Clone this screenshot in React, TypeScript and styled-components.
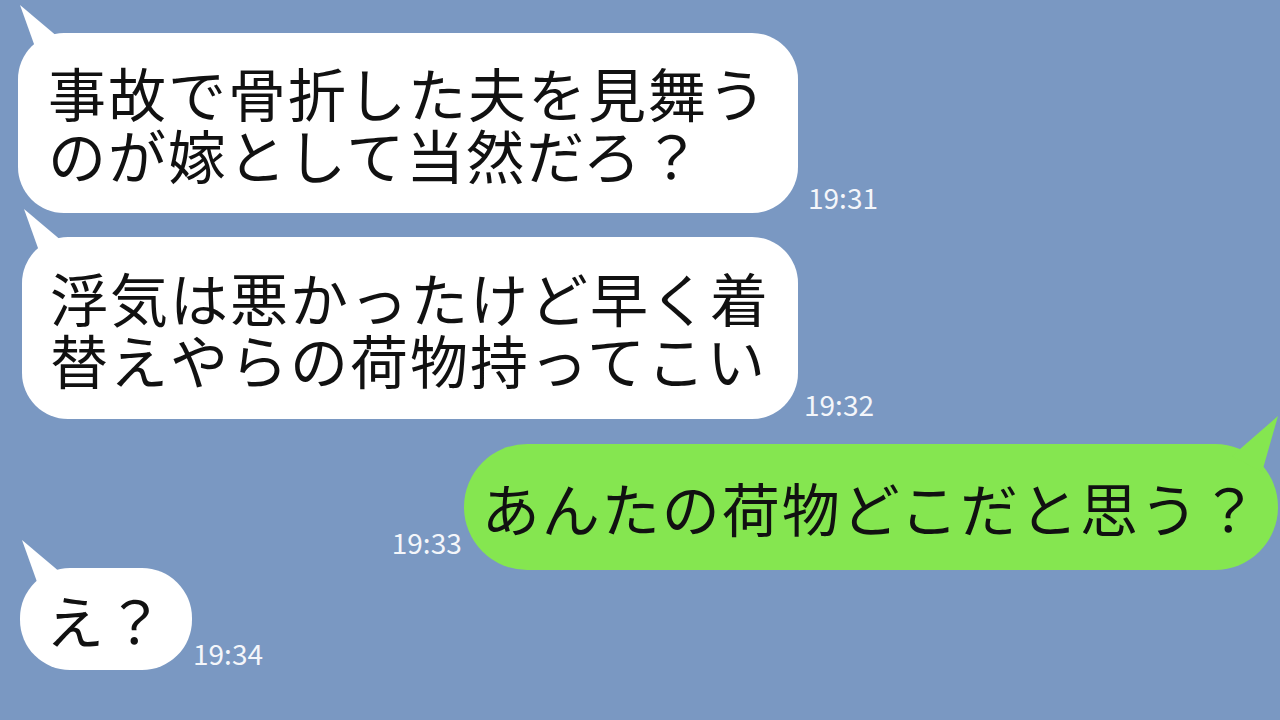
import React from 'react';
import styled, { createGlobalStyle } from 'styled-components';

const GlobalStyle = createGlobalStyle`
  html, body {
    margin: 0;
    padding: 0;
    background: #7a98c2;
  }
  body {
    font-family: "Noto Sans CJK JP", "Noto Sans", sans-serif;
  }
`;

type Side = 'left' | 'right';

interface Message {
  side: Side;
  lines: string[];
  time: string;
  top: number;
  inset: number;
  padY: number;
  padX: number;
  radius: number;
  timeGap: number;
  timeLift: number;
}

const messages: Message[] = [
  {
    side: 'left',
    lines: ['事故で骨折した夫を見舞う', 'のが嫁として当然だろ？'],
    time: '19:31',
    top: 33,
    inset: 18,
    padY: 28,
    padX: 30,
    radius: 46,
    timeGap: 10,
    timeLift: 2,
  },
  {
    side: 'left',
    lines: ['浮気は悪かったけど早く着', '替えやらの荷物持ってこい'],
    time: '19:32',
    top: 24,
    inset: 22,
    padY: 29,
    padX: 28,
    radius: 46,
    timeGap: 6,
    timeLift: 1,
  },
  {
    side: 'right',
    lines: ['あんたの荷物どこだと思う？'],
    time: '19:33',
    top: 25,
    inset: 2,
    padY: 32,
    padX: 18,
    radius: 64,
    timeGap: 2,
    timeLift: 14,
  },
  {
    side: 'left',
    lines: ['え？'],
    time: '19:34',
    top: -2,
    inset: 20,
    padY: 20,
    padX: 26,
    radius: 50,
    timeGap: 1,
    timeLift: 3,
  },
];

const Chat = styled.div`
  width: 1280px;
  height: 720px;
  overflow: hidden;
  display: flex;
  flex-direction: column;
  background: #7a98c2;
`;

const Row = styled.div<{ $side: Side; $top: number; $inset: number }>`
  display: flex;
  flex-direction: ${(p) => (p.$side === 'left' ? 'row' : 'row-reverse')};
  align-items: flex-end;
  margin-top: ${(p) => p.$top}px;
  padding-left: ${(p) => (p.$side === 'left' ? p.$inset : 0)}px;
  padding-right: ${(p) => (p.$side === 'right' ? p.$inset : 0)}px;
`;

const Bubble = styled.div<{ $side: Side; $padY: number; $padX: number; $radius: number }>`
  position: relative;
  background: ${(p) => (p.$side === 'left' ? '#ffffff' : '#85e650')};
  border-radius: ${(p) => p.$radius}px;
  padding: ${(p) => `${p.$padY}px ${p.$padX}px`};
  color: #111111;
  font-size: 58px;
  line-height: 62px;
  letter-spacing: 2px;
  white-space: nowrap;
`;

const Tail = styled.svg<{ $side: Side }>`
  position: absolute;
  top: -30px;
  ${(p) => (p.$side === 'left' ? 'left: -10px;' : 'right: -10px;')}
  width: 60px;
  height: 60px;
  overflow: visible;
`;

const Line = styled.div`
  display: block;
`;

const Time = styled.span<{ $side: Side; $gap: number; $lift: number }>`
  color: #f4f6fa;
  font-family: "Noto Sans CJK JP", "Noto Sans", sans-serif;
  font-size: 28px;
  line-height: 28px;
  margin-bottom: ${(p) => p.$lift}px;
  ${(p) => (p.$side === 'left' ? `margin-left: ${p.$gap}px;` : `margin-right: ${p.$gap}px;`)}
`;

const ChatTail = ({ side }: { side: Side }) => {
  const fill = side === 'left' ? '#ffffff' : '#85e650';
  return side === 'left' ? (
    <Tail $side="left" viewBox="-10 -30 60 60">
      <polygon points="2,-28 21,25 47,10" fill={fill} />
    </Tail>
  ) : (
    <Tail $side="right" viewBox="-50 -30 60 60">
      <polygon points="0,-28 -16,28 -46,12" fill={fill} />
    </Tail>
  );
};

export default function App() {
  return (
    <>
      <GlobalStyle />
      <Chat>
        {messages.map((m) => (
          <Row key={m.time} $side={m.side} $top={m.top} $inset={m.inset}>
            <Bubble $side={m.side} $padY={m.padY} $padX={m.padX} $radius={m.radius}>
              <ChatTail side={m.side} />
              {m.lines.map((l) => (
                <Line key={l}>{l}</Line>
              ))}
            </Bubble>
            <Time $side={m.side} $gap={m.timeGap} $lift={m.timeLift}>
              {m.time}
            </Time>
          </Row>
        ))}
      </Chat>
    </>
  );
}
